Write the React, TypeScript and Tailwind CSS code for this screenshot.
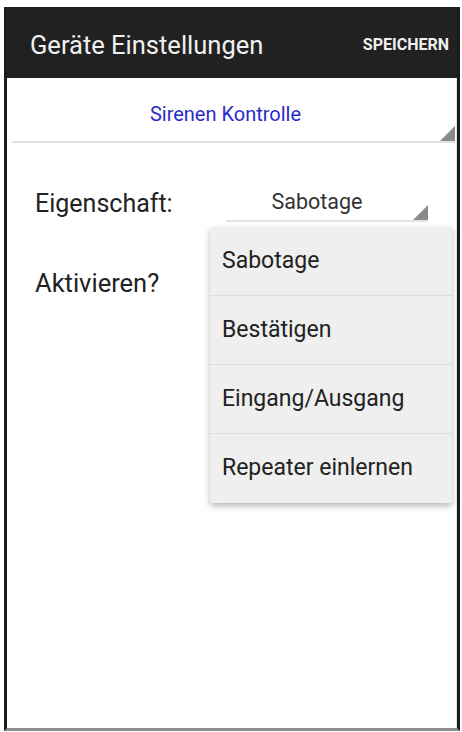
const menuItems = ["Sabotage", "Bestätigen", "Eingang/Ausgang", "Repeater einlernen"];

function SpinnerCorner({ className }: { className: string }) {
  return (
    <svg viewBox="0 0 16 16" className={className}>
      <polygon points="16,0 16,16 0,16" fill="#8a8a8a" />
    </svg>
  );
}

export default function App() {
  return (
    <div
      className="h-[732px] w-[462px] overflow-hidden bg-white pl-[4px] pt-[7px]"
      style={{ fontFamily: "Roboto, 'Noto Sans', sans-serif" }}
    >
      <div className="relative flex h-[724px] w-[456px] flex-col border-x-[3px] border-b-[3px] border-x-[#1c1c1c] border-b-[#8c8c8c]">
        {/* action bar */}
        <div className="flex h-[71px] shrink-0 items-center justify-between bg-[#212121] pt-[4px] pl-[23px] pr-[8px]">
          <span className="text-[25.5px] leading-[30px] text-[#f0f0f0]">Geräte Einstellungen</span>
          <span className="text-[16px] leading-[20px] font-bold text-[#f0f0f0]">SPEICHERN</span>
        </div>

        <div className="flex flex-1 flex-col border-r border-[#e4e4e4]">
          {/* device spinner */}
          <div className="relative mr-[1px] ml-[5px] flex h-[65px] items-center justify-center border-b-2 border-[#e2e2e2] pt-[8px] pr-[16px]">
            <span className="text-[20px] leading-[24px] text-[#2b2bc8]">Sirenen Kontrolle</span>
            <SpinnerCorner className="absolute right-0 bottom-0 h-[15px] w-[15px]" />
          </div>

          {/* property row */}
          <div className="mt-[38px] flex items-center pl-[28px]">
            <span className="w-[191px] pt-[5px] text-[25px] leading-[30px] text-[#222]">Eigenschaft:</span>
            <div className="relative flex h-[41px] w-[202px] items-center justify-center border-b-2 border-[#e2e2e2] pt-[2px] pr-[20px]">
              <span className="text-[21.5px] leading-[26px] text-[#333]">Sabotage</span>
              <SpinnerCorner className="absolute right-0 bottom-0 h-[15px] w-[15px]" />
            </div>
          </div>

          <div className="mt-[46px] pl-[28px]">
            <span className="text-[25.5px] leading-[30px] text-[#222]">Aktivieren?</span>
          </div>
        </div>

        {/* open dropdown */}
        <div className="absolute top-[220px] left-[203px] w-[242px] rounded-[2px] bg-[#efefef] shadow-[0_3px_6px_rgba(0,0,0,0.28)]">
          {menuItems.map((item, i) => (
            <div
              key={item}
              className={`flex h-[69px] items-center pl-[12px] text-[23px] text-[#222] ${i < menuItems.length - 1 ? "border-b border-[#dcdcdc]" : ""}`}
            >
              {item}
            </div>
          ))}
        </div>
      </div>
    </div>
  );
}
